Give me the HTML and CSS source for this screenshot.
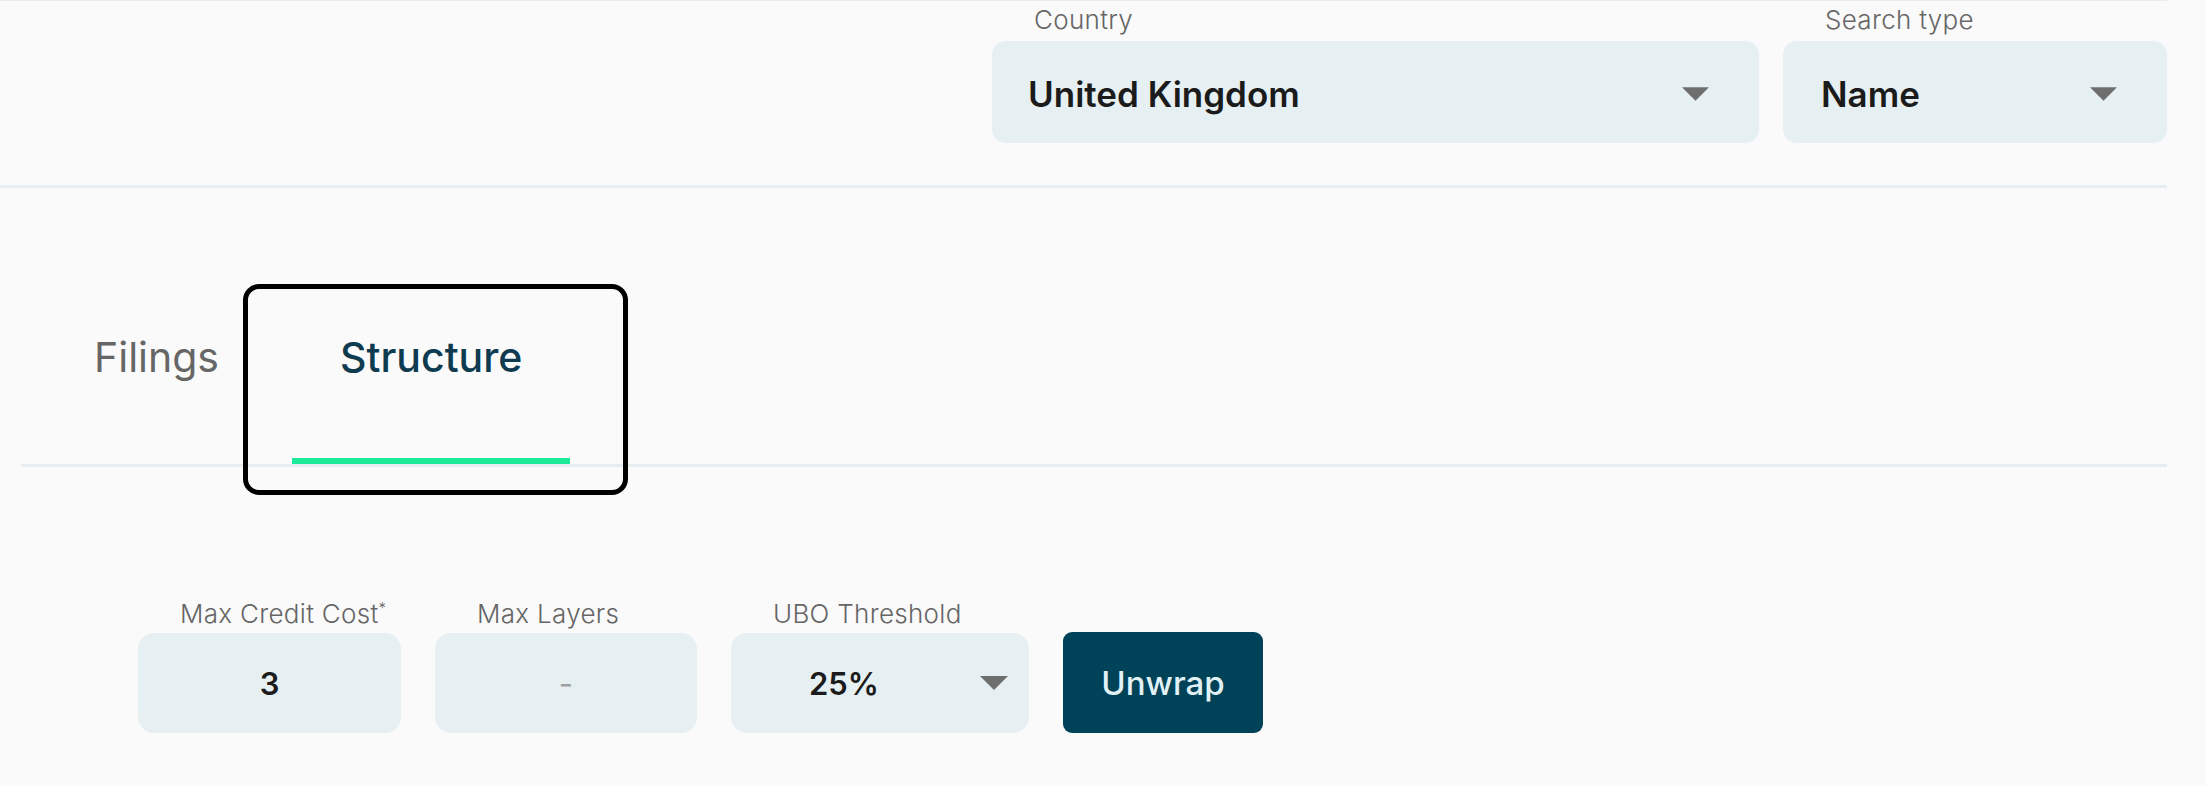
FILE: index.html
```html
<!DOCTYPE html>
<html lang="en">
<head>
<meta charset="utf-8">
<title>Structure</title>
<link rel="stylesheet" href="styles.css">
</head>
<body>
<div class="page">
  <header class="search-bar">
    <div class="field field-country">
      <span class="field-label">Country</span>
      <div class="select">
        <span class="select-value">United Kingdom</span>
        <svg class="caret" viewBox="0 0 28 14" aria-hidden="true"><polygon points="0,0 28,0 14,14"/></svg>
      </div>
    </div>
    <div class="field field-type">
      <span class="field-label">Search type</span>
      <div class="select">
        <span class="select-value">Name</span>
        <svg class="caret" viewBox="0 0 28 14" aria-hidden="true"><polygon points="0,0 28,0 14,14"/></svg>
      </div>
    </div>
  </header>

  <nav class="tabs-wrap">
    <div class="tabs">
      <div class="tab">Filings</div>
      <div class="tab tab-active">Structure</div>
    </div>
  </nav>

  <section class="controls">
    <div class="control control-credit">
      <span class="field-label">Max Credit Cost<sup>*</sup></span>
      <div class="box"><span class="box-value">3</span></div>
    </div>
    <div class="control control-layers">
      <span class="field-label">Max Layers</span>
      <div class="box"><span class="box-value muted">-</span></div>
    </div>
    <div class="control control-threshold">
      <span class="field-label">UBO Threshold</span>
      <div class="box box-select">
        <span class="box-value">25%</span>
        <svg class="caret small" viewBox="0 0 28 14" aria-hidden="true"><polygon points="0,0 28,0 14,14"/></svg>
      </div>
    </div>
    <button class="btn-unwrap" type="button">Unwrap</button>
  </section>
</div>
</body>
</html>
```

FILE: styles.css
```css
* { box-sizing: border-box; }

html, body {
  margin: 0;
  padding: 0;
  background: #fafafa;
  font-family: Inter, "Noto Sans", "Liberation Sans", sans-serif;
}

.page {
  width: 2167px;
  border-top: 1px solid #ececec;
}

/* ---------- header search bar ---------- */
.search-bar {
  display: flex;
  justify-content: flex-end;
  gap: 24px;
  height: 187px;
  padding-top: 4px;
  border-bottom: 3px solid #e6eef1;
}

.field {
  display: flex;
  flex-direction: column;
  gap: 6px;
}

.field-country { width: 767px; }
.field-type { width: 384px; }

.field-label {
  display: block;
  padding-left: 42px;
  font-size: 26px;
  line-height: 30px;
  color: #666;
  letter-spacing: 0.3px;
  font-weight: 300;
}

.field-label sup {
  font-size: 15px;
  line-height: 0;
  vertical-align: 10px;
}

.select {
  height: 102px;
  border-radius: 14px;
  background: #e6eff2;
  display: flex;
  align-items: center;
  justify-content: space-between;
  padding: 4px 50px 0 36px;
}

.field-type .select { padding-left: 38px; }

.select-value {
  font-size: 35px;
  font-weight: 600;
  color: #1b1b1b;
}

.caret {
  width: 27px;
  height: 14px;
  fill: #6e6e6e;
  display: block;
}

/* ---------- tabs ---------- */
.tabs-wrap {
  margin-left: 21px;
  padding-top: 124px;
  border-bottom: 3px solid #e6eef1;
}

.tabs {
  display: flex;
  gap: 25px;
  padding-left: 25px;
}

.tab {
  position: relative;
  padding: 21px 48px 83px;
  font-size: 41px;
  line-height: 48px;
  color: #666;
  font-weight: 400;
}

.tab-active {
  color: #0e3b50;
  font-weight: 500;
}

.tab-active::before {
  content: "";
  position: absolute;
  left: 0;
  right: 0;
  bottom: 0;
  height: 6px;
  background: #1aea9a;
}

.tab-active::after {
  content: "";
  position: absolute;
  left: -49px;
  right: -58px;
  top: -28px;
  bottom: -31px;
  border: 5px solid #000;
  border-radius: 16px;
}

/* ---------- unwrap controls ---------- */
.controls {
  display: flex;
  align-items: flex-end;
  gap: 34px;
  padding: 132px 0 0 138px;
}

.control {
  display: flex;
  flex-direction: column;
  gap: 4px;
}

.control-credit { width: 263px; }
.control-layers { width: 262px; }
.control-threshold { width: 298px; }

.box {
  height: 100px;
  border-radius: 16px;
  background: #e6eff2;
  display: flex;
  align-items: center;
  justify-content: center;
}

.box-select {
  justify-content: flex-start;
  padding: 0 21px 0 78px;
}

.box-select .box-value { flex: 1; }

.box-value {
  font-size: 31px;
  font-weight: 600;
  color: #1b1b1b;
}

.box-value.muted {
  color: #9aa0a3;
  font-weight: 400;
}

.caret.small {
  width: 28px;
  height: 14px;
}

.btn-unwrap {
  width: 200px;
  height: 101px;
  border: none;
  border-radius: 9px;
  background: #004257;
  color: #e2f1f6;
  font-family: Inter, "Noto Sans", "Liberation Sans", sans-serif;
  font-size: 33px;
  font-weight: 500;
  cursor: pointer;
}
```
